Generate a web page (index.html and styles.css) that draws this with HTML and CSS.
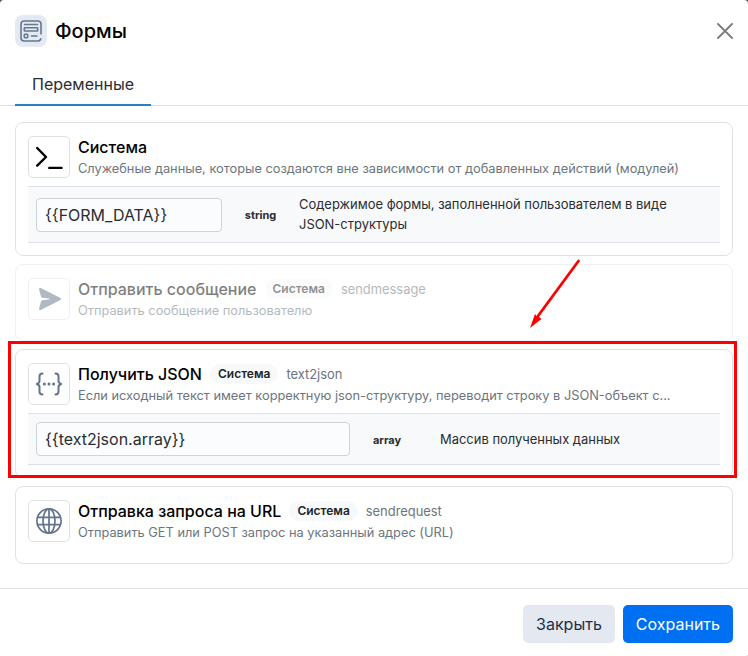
FILE: index.html
```html
<!DOCTYPE html>
<html lang="ru">
<head>
<meta charset="utf-8">
<title>Формы</title>
<link rel="stylesheet" href="styles.css">
</head>
<body>
<div class="modal">
  <header class="head">
    <span class="head-icon">
      <svg width="22" height="22" viewBox="0 0 22 22" fill="none" stroke="#64788f" stroke-width="1.600" stroke-linecap="round" stroke-linejoin="round">
        <path d="M21 14V4.200Q21 1 17.800 1H4.200Q1 1 1 4.200V17.800Q1 21 4.200 21H17.800Q20.300 21 20.800 18.800"/>
        <path d="M4.500 4.500H17.500M11.500 16H17"/>
        <rect x="4.300" y="7.800" width="13.400" height="3.200" rx=".5"/>
        <rect x="4.300" y="14.300" width="3.400" height="3.400" rx=".6"/>
      </svg>
    </span>
    <h1 class="head-title">Формы</h1>
    <button class="close" aria-label="Закрыть окно">
      <svg width="16" height="16" viewBox="0 0 16 16" stroke="#7b7b7b" stroke-width="1.800" stroke-linecap="round"><path d="M1 1 15 15M15 1 1 15"/></svg>
    </button>
  </header>
  <nav class="tabs"><a class="tab">Переменные</a></nav>

  <main class="list">
    <section class="card card-first">
      <div class="info">
        <span class="icon">
          <svg width="28" height="24" viewBox="0 0 28 24" fill="none" stroke="#000" stroke-width="2.400" stroke-linecap="round" stroke-linejoin="round"><path d="M2.200 3 11 12 2.200 20.600M14.300 23H26.500"/></svg>
        </span>
        <div class="text">
          <div class="line"><h2 class="title">Система</h2></div>
          <p class="desc">Служебные данные, которые создаются вне зависимости от добавленных действий (модулей)</p>
        </div>
      </div>
      <div class="row row-form">
        <input class="field" value="{{FORM_DATA}}" readonly>
        <b class="type">string</b>
        <p class="note">Содержимое формы, заполненной пользователем в виде JSON-структуры</p>
      </div>
    </section>

    <section class="card card-message muted">
      <div class="info">
        <span class="icon icon-send">
          <svg width="24" height="24" viewBox="0 0 24 24" fill="#64748b"><path d="M1.800.9Q.8 1.200 1.100 2.600L3 9.600Q3.300 10.500 4.300 10.700L11 11.600Q11.800 12 11 12.400L4.300 13.300Q3.300 13.500 3 14.400L1.100 21.400Q.8 22.800 1.800 23.100 2.200 23.200 2.700 23L22.500 12.900Q23.900 12 22.500 11.100L2.700 1Q2.200.8 1.800.9Z"/></svg>
        </span>
        <div class="text">
          <div class="line"><h2 class="title">Отправить сообщение</h2><span class="badge">Система</span><span class="code">sendmessage</span></div>
          <p class="desc">Отправить сообщение пользователю</p>
        </div>
      </div>
    </section>

    <section class="card card-json">
      <div class="info">
        <span class="icon">
          <svg width="28" height="24" viewBox="0 0 28 24" fill="none" stroke="#64748b" stroke-width="2" stroke-linecap="round" stroke-linejoin="round"><path d="M7.500 1.500Q4.500 1.500 4.500 4.500V9Q4.500 11 1.800 12 4.500 13 4.500 15V19.500Q4.500 22.500 7.500 22.500M20.500 1.500Q23.500 1.500 23.500 4.500V9Q23.500 11 26.200 12 23.500 13 23.500 15V19.500Q23.500 22.500 20.500 22.500"/><g fill="#64748b" stroke="none"><circle cx="9.400" cy="12" r="1.500"/><circle cx="14" cy="12" r="1.500"/><circle cx="18.600" cy="12" r="1.500"/></g></svg>
        </span>
        <div class="text">
          <div class="line"><h2 class="title">Получить JSON</h2><span class="badge">Система</span><span class="code">text2json</span></div>
          <p class="desc">Если исходный текст имеет корректную json-структуру, переводит строку в JSON-объект с...</p>
        </div>
      </div>
      <div class="row row-array">
        <input class="field" value="{{text2json.array}}" readonly>
        <b class="type">array</b>
        <p class="note">Массив полученных данных</p>
      </div>
    </section>

    <section class="card card-request">
      <div class="info">
        <span class="icon">
          <svg width="26" height="26" viewBox="0 0 26 26" fill="none" stroke="#64748b" stroke-width="1.700"><circle cx="13" cy="13" r="12.100"/><ellipse cx="13" cy="13" rx="6" ry="12.100"/><path d="M13 .8V25.200M1.800 9.300H24.200M1.800 16.700H24.200"/></svg>
        </span>
        <div class="text">
          <div class="line"><h2 class="title">Отправка запроса на URL</h2><span class="badge">Система</span><span class="code">sendrequest</span></div>
          <p class="desc">Отправить GET или POST запрос на указанный адрес (URL)</p>
        </div>
      </div>
    </section>
  </main>

  <footer class="foot">
    <button class="btn">Закрыть</button>
    <button class="btn btn-primary">Сохранить</button>
  </footer>

  <div class="highlight"></div>
  <svg class="arrow" width="54" height="72" viewBox="0 0 54 72"><path d="M50.500 3 10 58" stroke="#f00" stroke-width="2.800" stroke-linecap="round"/><path d="M2 70 7 56 8.500 58 10.500 58.500 13.500 61Z" fill="#f00"/></svg>
</div>
</body>
</html>
```
FILE: styles.css
```css
* { box-sizing: border-box; }
html { background: #555; }
body { margin: 0; font-family: Inter, "Liberation Sans", sans-serif; color: #2a2d31; }
h1, h2, p { margin: 0; }
button, input { font: inherit; }
svg { display: block; }

.modal {
  position: relative;
  display: flex;
  flex-direction: column;
  width: 748px;
  height: 656px;
  background: #fff;
  border-radius: 4px 4px 1px 0;
  overflow: hidden;
}

.head { display: flex; align-items: center; height: 62px; padding: 0 15px; }
.head-icon {
  display: grid;
  place-items: center;
  width: 32px;
  height: 32px;
  border-radius: 8px;
  background: #e5eaf2;
}
.head-title { margin-left: 8px; font-size: 20px; line-height: 30px; font-weight: 500; color: #000; }
.close { margin-left: auto; padding: 0; border: 0; background: none; }

.tabs { display: flex; height: 44px; padding: 0 15px; border-bottom: 1px solid #dee0e2; }
.tab {
  height: 44px;
  padding: 10px 17px 0;
  border-bottom: 2px solid #2b7fc3;
  font-size: 16px;
  line-height: 24px;
}

.list { display: flex; flex-direction: column; gap: 8px; height: 482px; padding: 16px 15px 0; }
.card { flex: none; padding: 13px 12px 0; border: 1px solid #dee2e6; border-radius: 8px; }
.card-first { height: 134px; }
.card-message { height: 77px; }
.card-json { height: 129px; }
.card-request { height: 78px; }
.muted { opacity: .5; }

.info { display: flex; gap: 8px; height: 50px; }
.icon {
  display: grid;
  place-items: center;
  flex: none;
  width: 42px;
  height: 42px;
  border: 1px solid #dee2e6;
  border-radius: 5px;
}
.icon-send { padding-left: 2px; }
.line { display: flex; align-items: center; height: 22px; }
.title { font-size: 16px; line-height: 22px; font-weight: 500; color: #000; white-space: nowrap; }
.badge {
  margin-left: 8px;
  padding: 0 8px;
  border-radius: 10px;
  background: #f8f9fa;
  color: #212529;
  font-size: 12px;
  line-height: 20px;
  font-weight: 600;
}
.code { margin-left: 8px; padding-top: 2px; font-size: 12.9px; line-height: 22px; color: #6c757d; }
.desc { padding-top: 1px; font-size: 12.8px; line-height: 20px; color: #6c757d; white-space: nowrap; }

.row {
  display: grid;
  align-items: center;
  border: solid #dee2e6;
  border-width: 1px 0;
  background: #f8f9fb;
  padding-left: 8px;
}
.row-form { grid-template-columns: 186px 77px 400px; height: 57px; }
.row-form .note { margin-top: -1px; }
.row-array { grid-template-columns: 314px 74px 1fr; height: 52px; }
.row-array .note { padding-left: 16px; }
.field {
  width: 100%;
  height: 34px;
  padding: 0 8px;
  border: 1px solid #ced4da;
  border-radius: 4px;
  background: #fbfcfe;
  color: #2a2d31;
  font-size: 16px;
  outline: none;
}
.type { font-size: 11px; line-height: 16px; padding-top: 1px; text-align: center; font-weight: 700; }
.note { font-size: 12.96px; line-height: 20px; }

.foot {
  display: flex;
  justify-content: flex-end;
  gap: 8px;
  height: 68px;
  padding: 16px 15px 0;
  border-top: 1px solid #dee2e6;
}
.btn {
  height: 38px;
  padding: 0 13px;
  border: 0;
  border-radius: 5px;
  background: #e3e8f1;
  color: #1e2f47;
  font-size: 16px;
}
.btn-primary { background: #0070f3; color: #fff; }

.highlight {
  position: absolute;
  left: 8px;
  top: 341px;
  width: 729px;
  height: 137px;
  border: 3px solid #f00;
}
.arrow { position: absolute; left: 528px; top: 258px; }
```
